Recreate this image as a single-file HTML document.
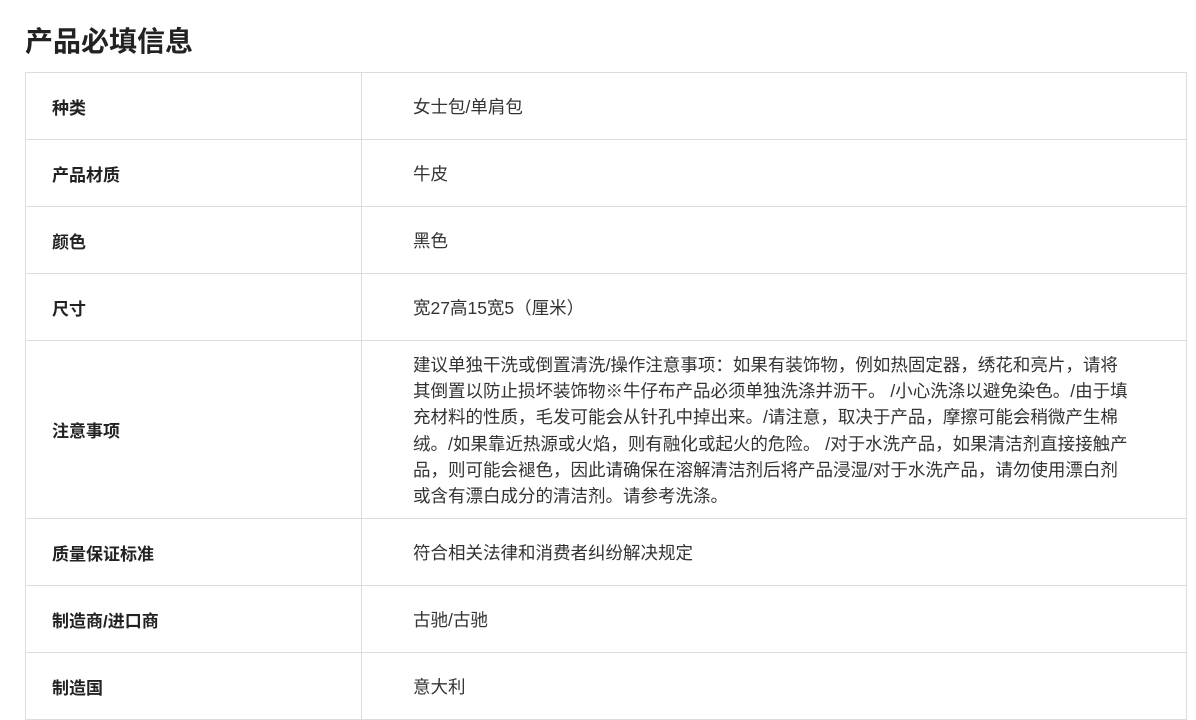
<!DOCTYPE html>
<html><head><meta charset="utf-8"><style>
html,body{margin:0;padding:0;background:#fff;width:1196px;height:697px;overflow:hidden}
body{font-family:"Liberation Sans","Noto Sans CJK SC",sans-serif;color:#333}
h1{position:absolute;left:25px;top:22px;margin:0;font-size:28px;font-weight:bold;color:#222;line-height:40px}
table{position:absolute;left:25px;top:72px;width:1162px;border-collapse:collapse}
td{border:1px solid #dcdcdc;height:67px;padding:0;font-size:17.5px;vertical-align:middle;box-sizing:border-box}
td.k{width:336px;padding-left:26px;font-weight:bold;color:#222;font-size:17px}
td.v{padding-left:51px;color:#333}
td.n{height:178px;line-height:26.2px;white-space:nowrap;padding-top:2px}
</style></head><body>
<h1>产品必填信息</h1>
<table>
<tr><td class="k">种类</td><td class="v">女士包/单肩包</td></tr>
<tr><td class="k">产品材质</td><td class="v">牛皮</td></tr>
<tr><td class="k">颜色</td><td class="v">黑色</td></tr>
<tr><td class="k">尺寸</td><td class="v">宽27高15宽5（厘米）</td></tr>
<tr><td class="k">注意事项</td><td class="v n">建议单独干洗或倒置清洗/操作注意事项：如果有装饰物，例如热固定器，绣花和亮片，请将<br>其倒置以防止损坏装饰物※牛仔布产品必须单独洗涤并沥干。 /小心洗涤以避免染色。/由于填<br>充材料的性质，毛发可能会从针孔中掉出来。/请注意，取决于产品，摩擦可能会稍微产生棉<br>绒。/如果靠近热源或火焰，则有融化或起火的危险。 /对于水洗产品，如果清洁剂直接接触产<br>品，则可能会褪色，因此请确保在溶解清洁剂后将产品浸湿/对于水洗产品，请勿使用漂白剂<br>或含有漂白成分的清洁剂。请参考洗涤。</td></tr>
<tr><td class="k">质量保证标准</td><td class="v">符合相关法律和消费者纠纷解决规定</td></tr>
<tr><td class="k">制造商/进口商</td><td class="v">古驰/古驰</td></tr>
<tr><td class="k">制造国</td><td class="v">意大利</td></tr>
</table>
</body></html>
